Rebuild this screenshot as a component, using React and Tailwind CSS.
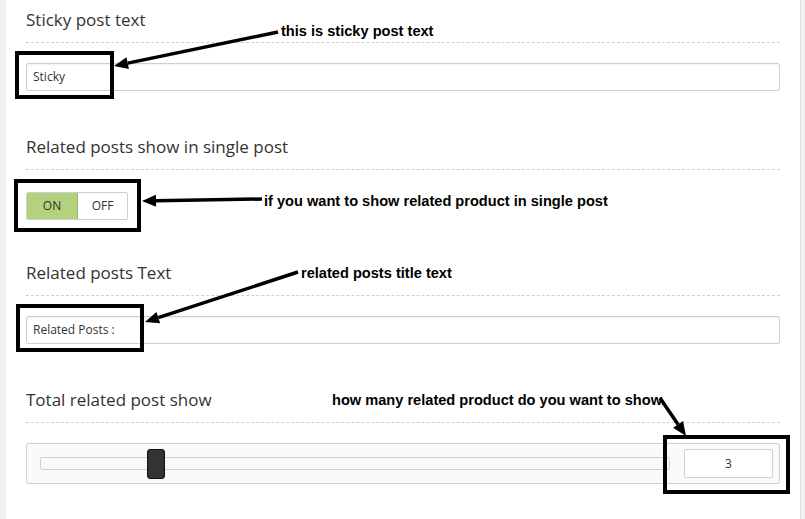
function Arrow({ x1, y1, x2, y2 }) {
	// line from (x1,y1) with arrowhead tip at (x2,y2)
	const dx = x2 - x1;
	const dy = y2 - y1;
	const len = Math.sqrt(dx * dx + dy * dy);
	const ux = dx / len;
	const uy = dy / len;
	const head = 14;
	const half = 6;
	const bx = x2 - ux * head;
	const by = y2 - uy * head;
	const pts = `${x2},${y2} ${bx - uy * half},${by + ux * half} ${bx + uy * half},${by - ux * half}`;
	return (
		<g>
			<line x1={x1} y1={y1} x2={bx} y2={by} stroke="#000" strokeWidth="3.5" />
			<polygon points={pts} fill="#000" />
		</g>
	);
}

function Heading({ children }) {
	return (
		<div className="pb-[10px] border-b border-dashed border-[#d0d0d0]">
			<h3 className="text-[17px] leading-[24px] text-[#333]">{children}</h3>
		</div>
	);
}

function TextInput({ value }) {
	return (
		<div className="mt-[20px] h-[28px] bg-white border border-[#cfcfcf] rounded-[2px] shadow-[inset_0_1px_2px_rgba(0,0,0,0.06)] flex items-center px-[6px] text-[12px] text-[#333]">
			{value}
		</div>
	);
}

function Note({ className, children }) {
	return (
		<span className={`absolute whitespace-nowrap font-['Liberation_Sans',Arial,sans-serif] font-bold text-[14.6px] leading-[18px] text-black ${className}`}>
			{children}
		</span>
	);
}

export default function App() {
	return (
		<div className="relative flex h-[519px] w-full font-['Open_Sans',sans-serif] overflow-hidden">
			<div className="w-[6px] bg-[#f1f1f1]" />
			<div className="w-[795px] bg-white border-r border-[#dcdcdc] px-[20px] pt-[8px] flex flex-col">
				{/* Sticky post text */}
				<div>
					<Heading>Sticky post text</Heading>
					<TextInput value="Sticky" />
				</div>

				{/* Related posts on/off */}
				<div className="pt-[44px]">
					<Heading>Related posts show in single post</Heading>
					<div className="mt-[22px] flex w-[102px] h-[28px] text-[12px] text-[#333] rounded-[2px] overflow-hidden border border-[#cfcfcf]">
						<div className="w-[51px] flex items-center justify-center bg-[#b3d27e] border-r border-[#97b565]">ON</div>
						<div className="flex-1 flex items-center justify-center bg-white">OFF</div>
					</div>
				</div>

				{/* Related posts text */}
				<div className="pt-[41px]">
					<Heading>Related posts Text</Heading>
					<TextInput value="Related Posts :" />
				</div>

				{/* Total related posts */}
				<div className="pt-[44px]">
					<Heading>Total related post show</Heading>
					<div className="mt-[20px] h-[41px] bg-[#fafafa] border border-[#d0d0d0] rounded-[2px] flex items-center gap-[14px] pl-[13px] pr-[6px]">
						<div className="relative w-[630px] h-[13px] bg-[#fafafa] border border-[#d0d0d0] rounded-[2px]">
							<div className="absolute left-[106px] top-[-9px] w-[18px] h-[30px] bg-[#333] border border-[#111] rounded-[3px]" />
						</div>
						<div className="w-[89px] h-[29px] bg-white border border-[#d0d0d0] rounded-[2px] flex items-center justify-center text-[12px] text-[#4a2a2a]">
							3
						</div>
					</div>
				</div>
			</div>
			<div className="flex-1 bg-[#f1f1f1]" />

			{/* Annotation boxes */}
			<div className="absolute left-[15px] top-[51px] w-[99px] h-[48px] border-4 border-black" />
			<div className="absolute left-[14px] top-[179px] w-[127px] h-[53px] border-4 border-black" />
			<div className="absolute left-[16px] top-[304px] w-[128px] h-[48px] border-4 border-black" />
			<div className="absolute left-[663px] top-[435px] w-[127px] h-[59px] border-4 border-black" />

			{/* Annotation arrows */}
			<svg className="absolute inset-0 pointer-events-none" width="805" height="519">
				<Arrow x1={278} y1={32} x2={114} y2={66} />
				<Arrow x1={262} y1={199} x2={142} y2={201} />
				<Arrow x1={298} y1={272} x2={145} y2={322} />
				<Arrow x1={660} y1={398} x2={686} y2={436} />
			</svg>

			{/* Annotation texts */}
			<Note className="left-[281px] top-[22px]">this is sticky post text</Note>
			<Note className="left-[264px] top-[192px]">if you want to show related product in single post</Note>
			<Note className="left-[301px] top-[264px]">related posts title text</Note>
			<Note className="left-[332px] top-[391px]">how many related product do you want to show.</Note>
		</div>
	);
}
